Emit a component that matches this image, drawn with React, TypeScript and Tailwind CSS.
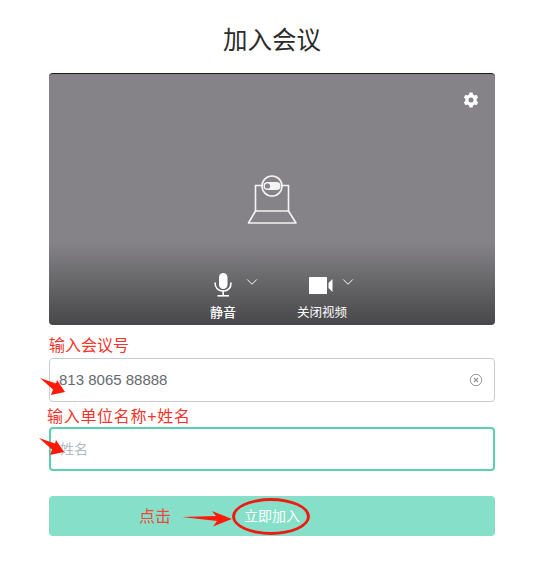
import { ChevronDown } from "lucide-react";

const cjk = { fontFamily: '"Liberation Sans", "Noto Sans CJK SC", sans-serif' };

function RedArrow({ className }: { className: string }) {
  // hand-drawn annotation arrow, tail at top left
  return (
    <svg className={className} width="28" height="18" viewBox="0 0 28 18">
      <path d="M0 0 L16 5.5 L17 2 L25 14 L11 17 L13 11.5 Z" fill="#ff1a0a" />
    </svg>
  );
}

function CameraIcon() {
  return (
    <svg width="50" height="52" viewBox="0 0 50 52" fill="none" stroke="#f4f4f4" strokeWidth="1.6">
      <path d="M16 11.5 H8.5 V37 H41.5 V11.5 H34" />
      <path d="M8.5 37 L1.5 49 H49 L41.5 37" strokeLinejoin="round" />
      <circle cx="25" cy="12" r="10" />
      <rect x="16.5" y="8" width="17" height="8" rx="4" fill="#f4f4f4" stroke="none" />
      <circle cx="20.5" cy="12" r="2.6" fill="#858387" stroke="none" />
    </svg>
  );
}

function MicIcon() {
  return (
    <svg width="18" height="24" viewBox="0 0 18 24" fill="none">
      <rect x="5" y="0" width="8.5" height="16" rx="4.25" fill="#fff" />
      <path d="M1 9.5 C1 15 4.5 18 9.2 18 C14 18 17 15 17 9.5" stroke="#fff" strokeWidth="1.6" />
      <path d="M9.2 18 V22" stroke="#fff" strokeWidth="1.6" />
      <path d="M3.5 22.8 H15" stroke="#fff" strokeWidth="1.6" />
    </svg>
  );
}

function VideoIcon() {
  return (
    <svg width="24" height="17" viewBox="0 0 24 17" fill="#fff">
      <rect x="0" y="0" width="18" height="17" rx="0.5" />
      <path d="M19.5 6 L23.5 2 V15 L19.5 11 Z" />
    </svg>
  );
}

function GearIcon() {
  return (
    <svg width="16" height="16" viewBox="0 0 16 16">
      <path
        fillRule="evenodd"
        fill="#fff"
        d="M6.4 0.6 H9.6 L10 2.5 L11.6 3.4 L13.5 2.8 L15.1 5.5 L13.6 6.8 V8.7 L15.1 10.5 L13.5 13.2 L11.6 12.6 L10 13.5 L9.6 15.4 H6.4 L6 13.5 L4.4 12.6 L2.5 13.2 L0.9 10.5 L2.4 8.7 V6.8 L0.9 5.5 L2.5 2.8 L4.4 3.4 L6 2.5 Z M8 5.5 A2.5 2.5 0 1 0 8 10.5 A2.5 2.5 0 1 0 8 5.5 Z"
      />
    </svg>
  );
}

export default function App() {
  return (
    <div className="relative w-[539px] h-[574px] bg-white overflow-hidden" style={cjk}>
      <div className="w-[446px] ml-[49px]">
        {/* Title */}
        <h1 className="h-[73px] pt-[23px] text-center text-[24.5px] leading-[36px] text-[#2b2b2b]">加入会议</h1>

        {/* Preview */}
        <div className="relative h-[252px] rounded-[4px] border-t border-[#1c1c1c] bg-gradient-to-b from-[#858387] from-[67%] to-[#48484a] flex flex-col items-center">
          <div className="absolute right-[16px] top-[18px]">
            <GearIcon />
          </div>
          <div className="mt-[100px] h-[52px]">
            <CameraIcon />
          </div>
          <div className="mt-[47px] flex w-[446px]">
            <div className="ml-[147px] w-[70px] flex flex-col items-center text-white relative">
              <div className="h-[24px] w-[18px] -ml-[16px]">
                <MicIcon />
              </div>
              <ChevronDown className="absolute left-[47px] top-0" size={18} strokeWidth={1.3} />
              <span className="mt-[7px] text-[13px] leading-[18px] font-medium -ml-[16px] whitespace-nowrap">静音</span>
            </div>
            <div className="ml-[26px] w-[60px] flex flex-col items-center text-white relative">
              <div className="h-[24px] pt-[4px] -ml-[2px]">
                <VideoIcon />
              </div>
              <ChevronDown className="absolute left-[47px] top-0" size={18} strokeWidth={1.3} />
              <span className="mt-[7px] text-[12.5px] leading-[18px] whitespace-nowrap">关闭视频</span>
            </div>
          </div>
        </div>

        {/* Meeting number */}
        <div className="h-[33px] pt-[10px] text-[16px] leading-[22px] text-[#f5332b]">输入会议号</div>
        <div className="relative h-[44px] rounded-[4px] border border-[#c9cbd3] flex items-center pl-[9px] pr-[11px]">
          <span className="flex-1 text-[15px] text-[#666a70]">813 8065 88888</span>
          <svg width="14" height="14" viewBox="0 0 14 14" fill="none" stroke="#9a9a9a">
            <circle cx="7" cy="7" r="5.7" />
            <path d="M5 5 L9 9 M9 5 L5 9" strokeWidth="1.2" />
          </svg>
          <RedArrow className="absolute left-[-10px] top-[19px]" />
        </div>

        {/* Name */}
        <div className="h-[25px] pt-[4px] -ml-[2px] text-[16px] leading-[22px] tracking-[0.7px] text-[#f5332b]">
          输入单位名称+姓名
        </div>
        <div className="relative h-[44px] rounded-[4px] border-2 border-[#5ad0ae] flex items-center pl-[9px]">
          <span className="text-[14px] text-[#b4bac4]">姓名</span>
          <RedArrow className="absolute left-[-12px] top-[9px]" />
        </div>

        {/* Join */}
        <div className="relative mt-[25px] h-[40px] rounded-[4px] bg-[#86e0c9] flex items-center justify-center">
          <span className="text-[14px] text-white">立即加入</span>
          <span className="absolute left-[90px] top-[10px] text-[16px] leading-[22px] text-[#ea4a3f]">点击</span>
          <svg className="absolute left-[133px] top-[15px]" width="50" height="16" viewBox="0 0 50 16">
            <path d="M0 6 L34 5 L30 0 L50 8 L31 15.5 L35 10 Z" fill="#ff1a0a" />
          </svg>
          <div className="absolute left-[183px] top-[2px] w-[78px] h-[37px] rounded-[50%] border-[3px] border-[#f01b10]" />
        </div>
      </div>
    </div>
  );
}
